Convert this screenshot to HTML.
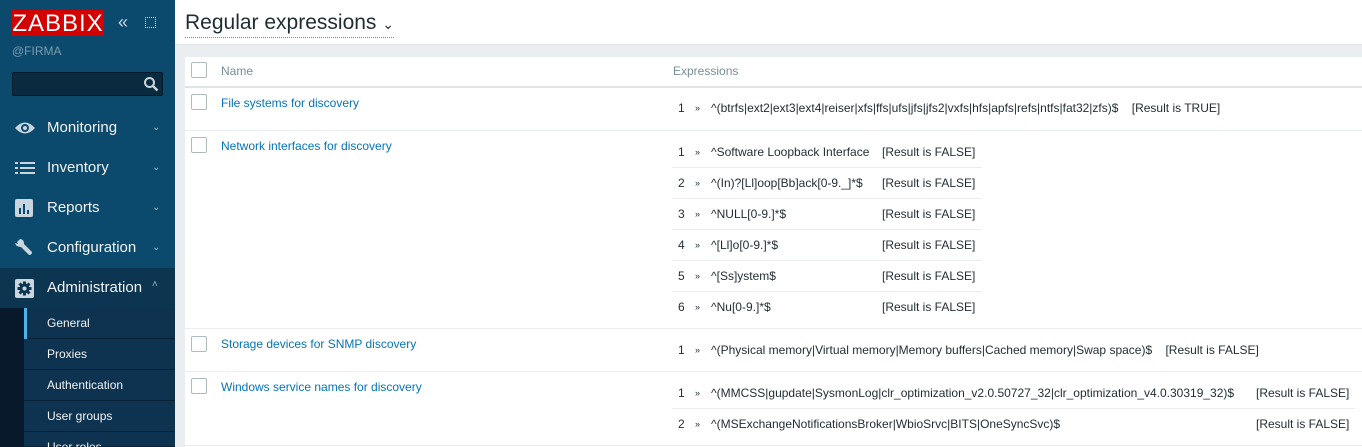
<!DOCTYPE html>
<html style="width:1362px;height:447px;overflow:hidden"><head><meta charset="utf-8"><style>
*{margin:0;padding:0;box-sizing:border-box}
body{width:1362px;height:447px;overflow:hidden;font-family:"Liberation Sans",Arial,sans-serif;font-size:12px;color:#1f2c33;background:#ebeef0;position:relative}
.a{position:absolute;white-space:nowrap}
#sb{position:absolute;left:0;top:0;width:175px;height:447px;background:#0b4a6d;overflow:hidden}
.mi{position:absolute;left:0;width:175px;height:40px;color:#f2f2f2;font-size:15px;line-height:40px;padding-left:47px}
.mi .ch{position:absolute;left:152px;top:0;font-size:10px;color:#9fb4c3}
.sub{position:absolute;left:24px;width:151px;height:31px;background:#0e3350;border-bottom:1px solid #082238;color:#f2f2f2;font-size:12px;line-height:31px;padding-left:23px}
.cb{position:absolute;width:16px;height:16px;border:1px solid #acbbc2;background:#fff;border-radius:2px}
.ln{position:absolute;height:1px;background:#ebeef0}
.lk{color:#0275b8}
.e{position:absolute;white-space:nowrap}
.e b{font-weight:normal;position:absolute;left:0}
.e i{font-style:normal;position:absolute;left:17px;font-size:9px;top:2px}
.e s{text-decoration:none;position:absolute;left:33px}
</style></head><body>
<div id="sb">
 <div class="a" style="left:12px;top:10px;width:92px;height:26px;background:#d40000;color:#fff;font-size:24px;line-height:27px;text-align:center;letter-spacing:1px">ZABBIX</div>
 <div class="a" style="left:118px;top:10px;color:#c9d6df;font-size:18px;line-height:24px">«</div>
 <div class="a" style="left:145px;top:17px;width:11px;height:11px;border:1px dotted #c9d6df"></div>
 <div class="a" style="left:12px;top:44px;color:#7b9ab0;font-size:12px">@FIRMA</div>
 <div class="a" style="left:12px;top:72px;width:151px;height:24px;background:#0a2a3f;border:1px solid #06192a;border-radius:2px"></div>
 <svg class="a" style="left:143px;top:76px" width="16" height="16" viewBox="0 0 16 16"><circle cx="6.5" cy="6.5" r="4.5" fill="none" stroke="#c9d6df" stroke-width="2"/><line x1="10" y1="10" x2="14.5" y2="14.5" stroke="#c9d6df" stroke-width="2.4"/></svg>
 <div class="mi" style="top:108px">Monitoring<span class="ch">⌄</span></div>
 <svg class="a" style="left:14px;top:120px" width="22" height="16" viewBox="0 0 22 16"><path d="M1 8 Q11 -3 21 8 Q11 19 1 8Z" fill="#c9d6df"/><circle cx="11" cy="8" r="4" fill="#0b4a6d"/><circle cx="11" cy="8" r="2" fill="#c9d6df"/></svg>
 <div class="mi" style="top:148px">Inventory<span class="ch">⌄</span></div>
 <svg class="a" style="left:15px;top:161px" width="20" height="14" viewBox="0 0 20 14"><g fill="#c9d6df"><rect x="0" y="1" width="3" height="2"/><rect x="5" y="1" width="15" height="2"/><rect x="0" y="6" width="3" height="2"/><rect x="5" y="6" width="15" height="2"/><rect x="0" y="11" width="3" height="2"/><rect x="5" y="11" width="15" height="2"/></g></svg>
 <div class="mi" style="top:188px">Reports<span class="ch">⌄</span></div>
 <svg class="a" style="left:15px;top:199px" width="18" height="18" viewBox="0 0 18 18"><rect width="18" height="18" rx="2" fill="#c9d6df"/><g fill="#0b4a6d"><rect x="4" y="9" width="2" height="6"/><rect x="8" y="5" width="2" height="10"/><rect x="12" y="11" width="2" height="4"/></g></svg>
 <div class="mi" style="top:228px">Configuration<span class="ch">⌄</span></div>
 <svg class="a" style="left:14px;top:238px" width="20" height="20" viewBox="0 0 20 20"><path d="M3 4 L6 1 Q10 1 10 6 L18 14 Q18 17 15 17 L7 9 Q2 9 1 5 L4 6Z" fill="#c9d6df"/></svg>
 <div class="a" style="left:0;top:268px;width:175px;height:40px;background:#0c3552"></div>
 <div class="mi" style="top:268px">Administration<span class="ch" style="top:-3px">˄</span></div>
 <svg class="a" style="left:15px;top:279px" width="19" height="19" viewBox="0 0 19 19"><rect width="19" height="19" rx="2" fill="#c9d6df"/><circle cx="9.5" cy="9.5" r="5" fill="#0c3552"/><g stroke="#0c3552" stroke-width="3"><line x1="9.5" y1="2.5" x2="9.5" y2="16.5"/><line x1="2.5" y1="9.5" x2="16.5" y2="9.5"/><line x1="4.5" y1="4.5" x2="14.5" y2="14.5"/><line x1="14.5" y1="4.5" x2="4.5" y2="14.5"/></g><circle cx="9.5" cy="9.5" r="2" fill="#c9d6df"/></svg>
 <div class="a" style="left:0;top:308px;width:24px;height:139px;background:#07192a"></div>
 <div class="sub" style="top:308px">General</div>
 <div class="a" style="left:24px;top:308px;width:3px;height:31px;background:#4fb3e8"></div>
 <div class="sub" style="top:339px">Proxies</div>
 <div class="sub" style="top:370px">Authentication</div>
 <div class="sub" style="top:401px">User groups</div>
 <div class="sub" style="top:432px;height:15px">User roles</div>
</div>
<div class="a" style="left:175px;top:0;width:1187px;height:45px;background:#fff;border-bottom:1px solid #dfe4e7"></div>
<div class="a" style="left:185px;top:10px;font-size:21px;color:#1f2c33;border-bottom:1px dotted #768d99;line-height:26px">Regular expressions <span style="font-size:14px">⌄</span></div>
<div class="a" style="left:185px;top:57px;width:1177px;height:390px;background:#fff"></div>
<div class="a" style="left:185px;top:86px;width:1177px;height:2px;background:#dfe4e7"></div>
<div class="cb" style="left:191px;top:62px"></div>
<div class="a" style="left:221px;top:64px;color:#768d99">Name</div>
<div class="a" style="left:673px;top:64px;color:#768d99">Expressions</div>

<div class="cb" style="left:191px;top:94px"></div>
<div class="a lk" style="left:221px;top:96px">File systems for discovery</div>
<div class="e" style="left:678px;top:101px"><b>1</b><i>»</i><s>^(btrfs|ext2|ext3|ext4|reiser|xfs|ffs|ufs|jfs|jfs2|vxfs|hfs|apfs|refs|ntfs|fat32|zfs)$ &nbsp;&nbsp; [Result is TRUE]</s></div>
<div class="ln" style="left:185px;top:130px;width:1177px"></div>

<div class="cb" style="left:191px;top:137px"></div>
<div class="a lk" style="left:221px;top:139px">Network interfaces for discovery</div>
<div class="e" style="left:678px;top:145px"><b>1</b><i>»</i><s>^Software Loopback Interface</s></div>
<div class="e" style="left:678px;top:176px"><b>2</b><i>»</i><s>^(In)?[Ll]oop[Bb]ack[0-9._]*$</s></div>
<div class="e" style="left:678px;top:207px"><b>3</b><i>»</i><s>^NULL[0-9.]*$</s></div>
<div class="e" style="left:678px;top:238px"><b>4</b><i>»</i><s>^[Ll]o[0-9.]*$</s></div>
<div class="e" style="left:678px;top:269px"><b>5</b><i>»</i><s>^[Ss]ystem$</s></div>
<div class="e" style="left:678px;top:300px"><b>6</b><i>»</i><s>^Nu[0-9.]*$</s></div>
<div class="a" style="left:882px;top:145px">[Result is FALSE]</div>
<div class="a" style="left:882px;top:176px">[Result is FALSE]</div>
<div class="a" style="left:882px;top:207px">[Result is FALSE]</div>
<div class="a" style="left:882px;top:238px">[Result is FALSE]</div>
<div class="a" style="left:882px;top:269px">[Result is FALSE]</div>
<div class="a" style="left:882px;top:300px">[Result is FALSE]</div>
<div class="ln" style="left:672px;top:167px;width:310px"></div>
<div class="ln" style="left:672px;top:198px;width:310px"></div>
<div class="ln" style="left:672px;top:229px;width:310px"></div>
<div class="ln" style="left:672px;top:260px;width:310px"></div>
<div class="ln" style="left:672px;top:291px;width:310px"></div>
<div class="ln" style="left:185px;top:328px;width:1177px"></div>

<div class="cb" style="left:191px;top:336px"></div>
<div class="a lk" style="left:221px;top:337px">Storage devices for SNMP discovery</div>
<div class="e" style="left:678px;top:343px"><b>1</b><i>»</i><s>^(Physical memory|Virtual memory|Memory buffers|Cached memory|Swap space)$ &nbsp;&nbsp; [Result is FALSE]</s></div>
<div class="ln" style="left:185px;top:371px;width:1177px"></div>

<div class="cb" style="left:191px;top:378px"></div>
<div class="a lk" style="left:221px;top:380px">Windows service names for discovery</div>
<div class="e" style="left:678px;top:386px"><b>1</b><i>»</i><s>^(MMCSS|gupdate|SysmonLog|clr_optimization_v2.0.50727_32|clr_optimization_v4.0.30319_32)$</s></div>
<div class="a" style="left:1256px;top:386px">[Result is FALSE]</div>
<div class="ln" style="left:672px;top:408px;width:683px"></div>
<div class="e" style="left:678px;top:417px"><b>2</b><i>»</i><s>^(MSExchangeNotificationsBroker|WbioSrvc|BITS|OneSyncSvc)$</s></div>
<div class="a" style="left:1256px;top:417px">[Result is FALSE]</div>
<div class="ln" style="left:185px;top:445px;width:1177px"></div>
</body></html>
